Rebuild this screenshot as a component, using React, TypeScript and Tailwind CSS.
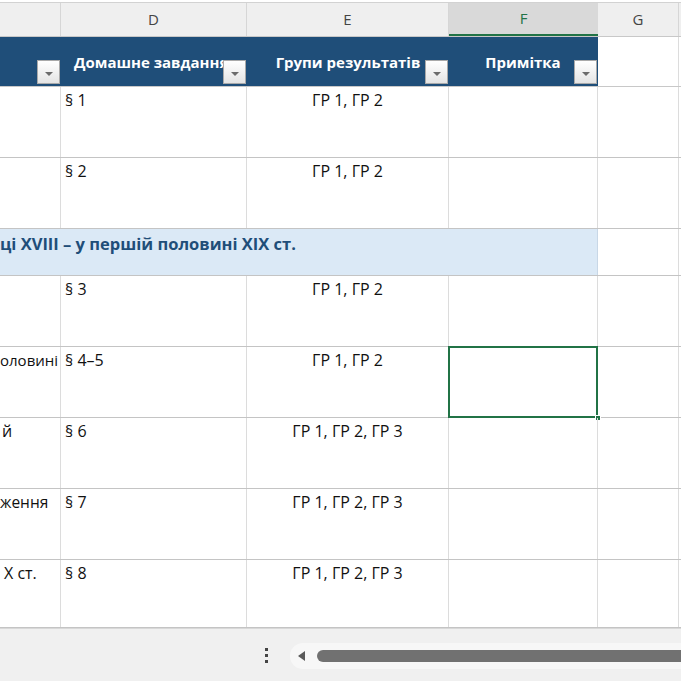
import React from "react";

type Row = {
  c?: string;
  cPad?: string;
  d: string;
  e: string;
  h?: string;
  selected?: boolean;
};

const rowsTop: Row[] = [
  { d: "§ 1", e: "ГР 1, ГР 2" },
  { d: "§ 2", e: "ГР 1, ГР 2" },
];

// column C is mostly scrolled out of view, only the tails of its lines show
const rowsBottom: Row[] = [
  { c: "", d: "§ 3", e: "ГР 1, ГР 2" },
  { c: "оловині", cPad: "pl-0 text-[15px]", d: "§ 4–5", e: "ГР 1, ГР 2", selected: true },
  { c: "й", cPad: "pl-[2px]", d: "§ 6", e: "ГР 1, ГР 2, ГР 3" },
  { c: "ження", cPad: "pl-0 text-[15.5px]", d: "§ 7", e: "ГР 1, ГР 2, ГР 3" },
  { c: "X ст.", cPad: "pl-[4px]", d: "§ 8", e: "ГР 1, ГР 2, ГР 3", h: "h-[68px]" },
];

function FilterButton() {
  return (
    <div className="absolute right-[1px] bottom-[2px] w-[23px] h-[24px] border border-[#a9a9a9] bg-gradient-to-b from-white to-[#e4e4e4] flex items-center justify-center">
      <div className="w-0 h-0 border-l-[4px] border-r-[4px] border-t-[4px] border-l-transparent border-r-transparent border-t-[#6b6b6b] mt-[3px]" />
    </div>
  );
}

function ColumnLetters() {
  const cell = "h-full flex items-center justify-center border-r border-[#d6d6d6] text-[15px] text-[#444]";
  return (
    <div className="bg-white pt-[2px]">
      <div className="flex h-[35px] bg-[#efefef] border-t border-[#d2d2d2] border-b border-b-[#c8c8c8]">
        <div className={`${cell} w-[61px]`} />
        <div className={`${cell} w-[186px]`}>D</div>
        <div className={`${cell} w-[202px]`}>E</div>
        <div className="h-full w-[149px] flex items-center justify-center bg-[#d9d9d9] border-b-2 border-[#217346] text-[15px] text-[#217346]">
          F
        </div>
        <div className={`${cell} w-[81px]`}>G</div>
        <div className="flex-1" />
      </div>
    </div>
  );
}

function HeaderRow() {
  const title = "text-white font-bold text-[15px] leading-[20px] whitespace-nowrap";
  return (
    <div className="flex h-[50px] border-b border-[#c8c8c8]">
      <div className="relative w-[61px] bg-[#1f4e79]">
        <FilterButton />
      </div>
      <div className={`relative w-[186px] bg-[#1f4e79] pl-[13px] pt-[15px] overflow-hidden ${title}`}>
        Домашне завдання
        <FilterButton />
      </div>
      <div className={`relative w-[202px] bg-[#1f4e79] pt-[15px] text-center ${title}`}>
        Групи результатів
        <FilterButton />
      </div>
      <div className={`relative w-[149px] bg-[#1f4e79] pt-[15px] pr-[1px] text-center ${title}`}>
        Примітка
        <FilterButton />
      </div>
      <div className="w-[81px] border-r border-[#dcdcdc]" />
      <div className="flex-1" />
    </div>
  );
}

function DataRow({ row }: { row: Row }) {
  const v = "border-r border-[#dcdcdc]";
  return (
    <div className={`flex ${row.h ?? "h-[71px]"} border-b border-[#c4c4c4] text-[16px] leading-[20px] text-[#111]`}>
      <div className={`w-[61px] ${v} overflow-hidden pt-[3px] whitespace-nowrap ${row.cPad ?? ""}`}>
        {row.c ?? ""}
      </div>
      <div className={`w-[186px] ${v} pl-[4px] pt-[3px]`}>{row.d}</div>
      <div className={`w-[202px] ${v} pt-[3px] text-center`}>{row.e}</div>
      <div className={`relative w-[149px] ${v}`}>
        {row.selected && (
          <>
            <div className="absolute left-[-1px] top-[-1px] right-[-1px] bottom-[-1px] border-2 border-[#217346]" />
            <div className="absolute right-[-4px] bottom-[-4px] w-[6px] h-[6px] bg-[#217346] border border-white" />
          </>
        )}
      </div>
      <div className={`w-[81px] ${v}`} />
      <div className="flex-1" />
    </div>
  );
}

function SectionRow() {
  return (
    <div className="flex h-[47px] border-b border-[#c4c4c4]">
      <div className="w-[598px] bg-[#dbe9f6] border-r border-[#c8d7e6] pt-[3px] text-[16.5px] leading-[24px] font-bold text-[#1f4e79] whitespace-nowrap">
        ці XVIII – у першій половині XIX ст.
      </div>
      <div className="w-[81px] border-r border-[#dcdcdc]" />
      <div className="flex-1" />
    </div>
  );
}

function BottomBar() {
  return (
    <div className="flex-1 bg-[#f0f0f0] border-t border-[#d8d8d8] flex items-center">
      <div className="w-[265px]" />
      {/* sheet tab menu */}
      <div className="flex flex-col gap-[3px] w-[4px] mt-[1px]">
        <div className="w-[3px] h-[3px] bg-[#444]" />
        <div className="w-[3px] h-[3px] bg-[#444]" />
        <div className="w-[3px] h-[3px] bg-[#444]" />
      </div>
      <div className="w-[21px]" />
      <div className="flex-1 h-[26px] bg-[#f7f7f7] rounded-l-[13px] flex items-center pl-[8px] mt-[2px]">
        <div className="w-0 h-0 border-t-[5px] border-b-[5px] border-r-[7px] border-t-transparent border-b-transparent border-r-[#5a5a5a]" />
        <div className="w-[12px]" />
        <div className="flex-1 h-[12px] bg-[#717171] rounded-l-[6px]" />
      </div>
    </div>
  );
}

export default function App() {
  return (
    <div className="w-[681px] h-[681px] overflow-hidden bg-white flex flex-col font-['Open_Sans',sans-serif]">
      <ColumnLetters />
      <HeaderRow />
      {rowsTop.map((r, i) => (
        <DataRow key={`t${i}`} row={r} />
      ))}
      <SectionRow />
      {rowsBottom.map((r, i) => (
        <DataRow key={`b${i}`} row={r} />
      ))}
      <BottomBar />
    </div>
  );
}
